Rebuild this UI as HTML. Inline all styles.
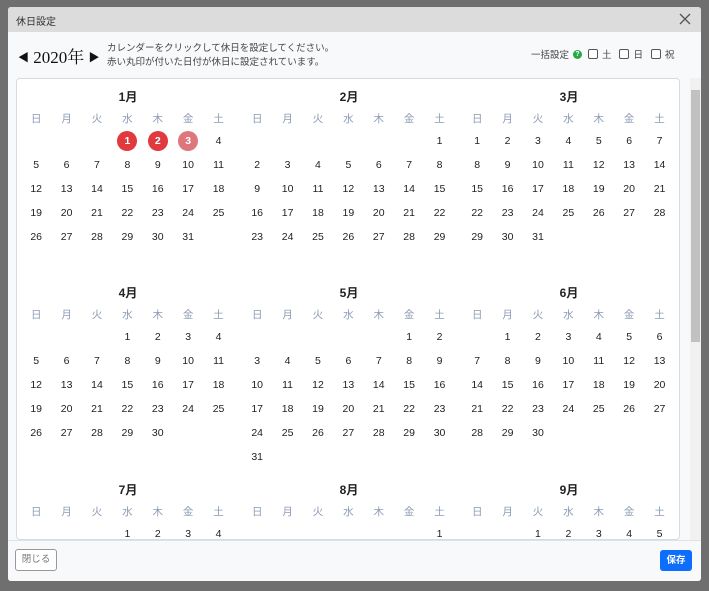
<!DOCTYPE html>
<html><head><meta charset="utf-8"><style>
*{box-sizing:border-box;margin:0;padding:0}
body{width:709px;height:591px;background:#6f6f6f;font-family:"Liberation Sans","Noto Sans CJK JP",sans-serif;position:relative;overflow:hidden}
.modal{position:absolute;left:8px;top:7px;width:693px;height:574px;background:#f8f9fa;border-radius:3px;overflow:hidden}
.hdr{height:25px;background:#dcdcdc;font-size:10px;color:#333;padding:6px 0 0 8px}
.x{position:absolute;right:10px;top:6px}
.year{position:absolute;left:10px;top:36px;font-family:"Liberation Serif","Noto Serif CJK SC",serif;font-size:17px;color:#111}
.info{position:absolute;left:99px;top:35px;font-size:9.5px;line-height:14px;color:#444}
.bulk{position:absolute;left:523px;top:40px;font-size:9.5px;color:#444;display:flex;align-items:center}
.q{display:inline-block;width:9px;height:9px;border-radius:50%;background:#28a745;color:#fff;font-size:7px;text-align:center;line-height:9px;font-weight:bold;margin:0 6px 0 4px}
.cb{display:inline-block;width:10px;height:10px;border:1px solid #555;border-radius:2px;background:#fff;margin-right:4px}
.panel{position:absolute;left:8px;top:71px;width:664px;height:462px;background:#fff;border:1px solid #d5dbe3;border-radius:4px;overflow:hidden}
.m{position:absolute;width:213px}
.t{text-align:center;font-size:12px;font-weight:bold;color:#222;height:20px;line-height:16px;margin-left:-1px}
.g{display:grid;grid-template-columns:repeat(7,30.4px);grid-auto-rows:24px;font-size:10.5px;color:#222;text-align:center;margin-left:-1px}
.g span{line-height:24px;display:flex;align-items:center;justify-content:center}
.g.d{grid-auto-rows:20px;color:#8b9bb4;font-size:10.5px}
.g.d span{line-height:18px}
.r{width:20px;height:20px;border-radius:50%;background:#e03a3e;color:#fff;font-weight:bold;line-height:20px}
.r.l{background:#dd777c}
.sb{position:absolute;left:682px;top:71px;width:11px;height:462px;background:#f1f1f1}
.th{position:absolute;left:1px;top:12px;width:9px;height:252px;background:#c1c1c1}
.ftr{position:absolute;left:0;top:533px;width:693px;height:41px;border-top:1px solid #dee2e6;background:#f8f9fa}
.bc{position:absolute;left:7px;top:8px;width:42px;height:22px;border:1px solid #999;border-radius:3px;background:#fff;font-size:9.5px;color:#777;text-align:center;line-height:20px}
.bs{position:absolute;left:652px;top:9px;width:32px;height:21px;border-radius:3px;background:#0d6efd;font-size:9.5px;color:#fff;text-align:center;line-height:21px;font-weight:bold}
</style></head><body>
<div class="modal">
<div class="hdr">休日設定</div><svg class="x" width="12" height="12" viewBox="0 0 12 12"><path d="M1 1L11 11M11 1L1 11" stroke="#555" stroke-width="1.3"/></svg>
<div class="year"><span style="font-size:11px;vertical-align:2px">◀</span> 2020年 <span style="font-size:11px;vertical-align:2px">▶</span></div>
<div class="info">カレンダーをクリックして休日を設定してください。<br>赤い丸印が付いた日付が休日に設定されています。</div>
<div class="bulk">一括設定<span class="q">?</span><span class="cb"></span>土&nbsp;&nbsp;&nbsp;<span class="cb"></span>日&nbsp;&nbsp;&nbsp;<span class="cb"></span>祝</div>
<div class="panel">
<div class="m" style="left:5px;top:10px"><div class="t">1月</div>
<div class="g d"><span>日</span><span>月</span><span>火</span><span>水</span><span>木</span><span>金</span><span>土</span></div>
<div class="g"><span></span><span></span><span></span><span><b class="r">1</b></span><span><b class="r">2</b></span><span><b class="r l">3</b></span><span>4</span>
<span>5</span><span>6</span><span>7</span><span>8</span><span>9</span><span>10</span><span>11</span>
<span>12</span><span>13</span><span>14</span><span>15</span><span>16</span><span>17</span><span>18</span>
<span>19</span><span>20</span><span>21</span><span>22</span><span>23</span><span>24</span><span>25</span>
<span>26</span><span>27</span><span>28</span><span>29</span><span>30</span><span>31</span></div></div>
<div class="m" style="left:226px;top:10px"><div class="t">2月</div>
<div class="g d"><span>日</span><span>月</span><span>火</span><span>水</span><span>木</span><span>金</span><span>土</span></div>
<div class="g"><span></span><span></span><span></span><span></span><span></span><span></span><span>1</span>
<span>2</span><span>3</span><span>4</span><span>5</span><span>6</span><span>7</span><span>8</span>
<span>9</span><span>10</span><span>11</span><span>12</span><span>13</span><span>14</span><span>15</span>
<span>16</span><span>17</span><span>18</span><span>19</span><span>20</span><span>21</span><span>22</span>
<span>23</span><span>24</span><span>25</span><span>26</span><span>27</span><span>28</span><span>29</span></div></div>
<div class="m" style="left:446px;top:10px"><div class="t">3月</div>
<div class="g d"><span>日</span><span>月</span><span>火</span><span>水</span><span>木</span><span>金</span><span>土</span></div>
<div class="g"><span>1</span><span>2</span><span>3</span><span>4</span><span>5</span><span>6</span><span>7</span>
<span>8</span><span>9</span><span>10</span><span>11</span><span>12</span><span>13</span><span>14</span>
<span>15</span><span>16</span><span>17</span><span>18</span><span>19</span><span>20</span><span>21</span>
<span>22</span><span>23</span><span>24</span><span>25</span><span>26</span><span>27</span><span>28</span>
<span>29</span><span>30</span><span>31</span></div></div>
<div class="m" style="left:5px;top:206px"><div class="t">4月</div>
<div class="g d"><span>日</span><span>月</span><span>火</span><span>水</span><span>木</span><span>金</span><span>土</span></div>
<div class="g"><span></span><span></span><span></span><span>1</span><span>2</span><span>3</span><span>4</span>
<span>5</span><span>6</span><span>7</span><span>8</span><span>9</span><span>10</span><span>11</span>
<span>12</span><span>13</span><span>14</span><span>15</span><span>16</span><span>17</span><span>18</span>
<span>19</span><span>20</span><span>21</span><span>22</span><span>23</span><span>24</span><span>25</span>
<span>26</span><span>27</span><span>28</span><span>29</span><span>30</span></div></div>
<div class="m" style="left:226px;top:206px"><div class="t">5月</div>
<div class="g d"><span>日</span><span>月</span><span>火</span><span>水</span><span>木</span><span>金</span><span>土</span></div>
<div class="g"><span></span><span></span><span></span><span></span><span></span><span>1</span><span>2</span>
<span>3</span><span>4</span><span>5</span><span>6</span><span>7</span><span>8</span><span>9</span>
<span>10</span><span>11</span><span>12</span><span>13</span><span>14</span><span>15</span><span>16</span>
<span>17</span><span>18</span><span>19</span><span>20</span><span>21</span><span>22</span><span>23</span>
<span>24</span><span>25</span><span>26</span><span>27</span><span>28</span><span>29</span><span>30</span>
<span>31</span></div></div>
<div class="m" style="left:446px;top:206px"><div class="t">6月</div>
<div class="g d"><span>日</span><span>月</span><span>火</span><span>水</span><span>木</span><span>金</span><span>土</span></div>
<div class="g"><span></span><span>1</span><span>2</span><span>3</span><span>4</span><span>5</span><span>6</span>
<span>7</span><span>8</span><span>9</span><span>10</span><span>11</span><span>12</span><span>13</span>
<span>14</span><span>15</span><span>16</span><span>17</span><span>18</span><span>19</span><span>20</span>
<span>21</span><span>22</span><span>23</span><span>24</span><span>25</span><span>26</span><span>27</span>
<span>28</span><span>29</span><span>30</span></div></div>
<div class="m" style="left:5px;top:403px"><div class="t">7月</div>
<div class="g d"><span>日</span><span>月</span><span>火</span><span>水</span><span>木</span><span>金</span><span>土</span></div>
<div class="g"><span></span><span></span><span></span><span>1</span><span>2</span><span>3</span><span>4</span></div></div>
<div class="m" style="left:226px;top:403px"><div class="t">8月</div>
<div class="g d"><span>日</span><span>月</span><span>火</span><span>水</span><span>木</span><span>金</span><span>土</span></div>
<div class="g"><span></span><span></span><span></span><span></span><span></span><span></span><span>1</span></div></div>
<div class="m" style="left:446px;top:403px"><div class="t">9月</div>
<div class="g d"><span>日</span><span>月</span><span>火</span><span>水</span><span>木</span><span>金</span><span>土</span></div>
<div class="g"><span></span><span></span><span>1</span><span>2</span><span>3</span><span>4</span><span>5</span></div></div>
</div>
<div class="sb"><div class="th"></div></div>
<div class="ftr"><div class="bc">閉じる</div><div class="bs">保存</div></div>
</div>
</body></html>
